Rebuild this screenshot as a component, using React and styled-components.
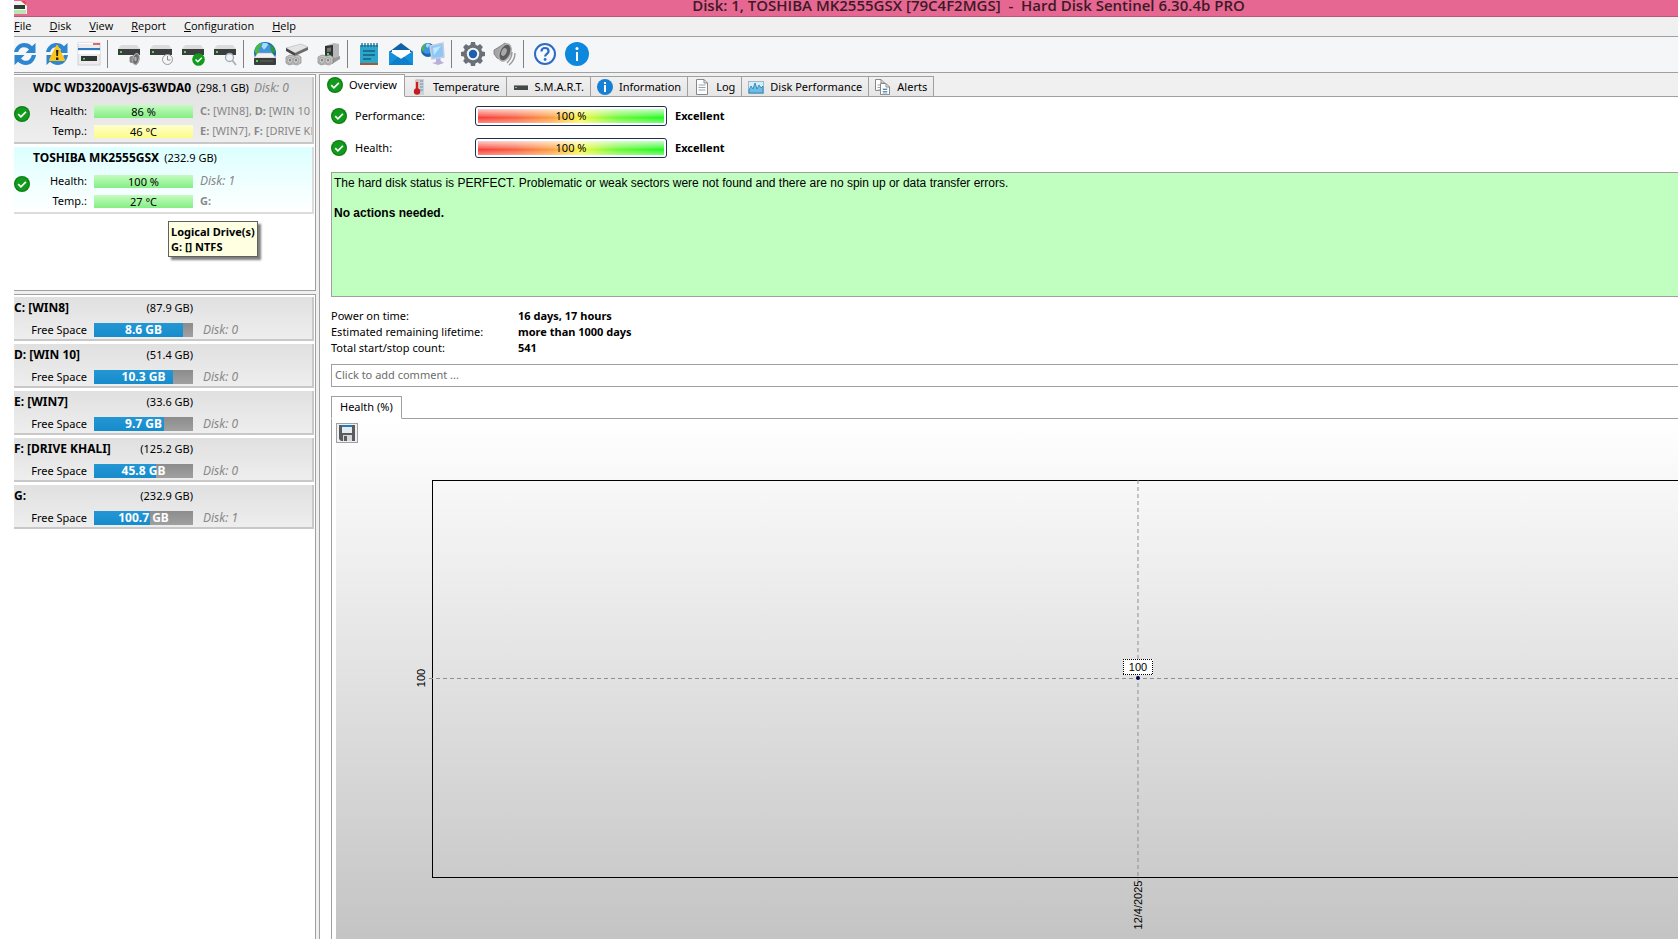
import React, { useState } from "react";
import styled, { createGlobalStyle, css } from "styled-components";

const GlobalStyle = createGlobalStyle`
  * {
    box-sizing: border-box;
  }
  body {
    margin: 0;
    background: #ffffff;
    color: #000000;
    font-family: "Noto Sans", "Open Sans", sans-serif;
    font-size: 11px;
    line-height: 16px;
    overflow-x: hidden;
  }
  button,
  input {
    font: inherit;
    color: inherit;
  }
`;

const Window = styled.div`
  min-height: 100vh;
  padding: 0 0 5px 14px;
  display: flex;
  flex-direction: column;
`;

const TitleBar = styled.header`
  height: 17px;
  display: flex;
  align-items: center;
  background: #e66792;
  border-bottom: 1px solid #b8577a;
  overflow: hidden;
  h1 {
    flex: 1;
    margin: 0 0 6px 232px;
    color: #3c1a26;
    font-family: "Open Sans", "Noto Sans", sans-serif;
    font-size: 15px;
    line-height: 20px;
    font-weight: 600;
    text-align: center;
    white-space: pre;
  }
`;

const MenuBar = styled.nav`
  height: 20px;
  display: flex;
  align-items: flex-start;
  gap: 18px;
  padding-top: 1px;
  background: #f0f0f0;
  border-bottom: 1px solid #a0a0a0;
  button {
    padding: 0;
    border: 0;
    background: none;
    font-family: "Open Sans", "Noto Sans", sans-serif;
  }
`;

const ToolBar = styled.div`
  height: 36px;
  display: flex;
  align-items: center;
  padding-bottom: 2px;
  overflow: hidden;
  background: #f5f6f8;
  border-bottom: 1px solid #a0a0a0;
`;

const ToolButton = styled.button`
  width: 32px;
  height: 32px;
  padding: 4px;
  border: 0;
  background: none;
  flex: none;
  &:first-child {
    margin-left: -5px;
  }
  svg {
    display: block;
  }
`;

const Separator = styled.span`
  width: 3px;
  height: 28px;
  margin-right: 5px;
  border-right: 1px solid #808080;
`;

const Content = styled.div`
  flex: 1;
  display: flex;
  gap: 3px;
  padding-top: 1px;
  background: #f0f0f0;
`;

const Sidebar = styled.aside`
  width: 302px;
  flex: none;
  display: flex;
  flex-direction: column;
  gap: 3px;
`;

const Panel = styled.section`
  display: flex;
  flex-direction: column;
  gap: 3px;
  padding: 2px 1px 0 0;
  background: #ffffff;
  border: 1px solid #a0a0a0;
  border-left: 0;
  ${({ $fill }) =>
    $fill
      ? css`
          flex: 1;
          border-bottom: 0;
        `
      : css`
          min-height: 217px;
        `}
`;

const Card = styled.article`
  flex: none;
  overflow: hidden;
  white-space: nowrap;
  border: solid ${({ $selected }) => ($selected ? "#dcdcdc" : "#c8c8c8")};
  border-width: 0 2px 2px 0;
  background: ${({ $selected }) =>
    $selected
      ? "linear-gradient(#dcffff, #ffffff)"
      : "linear-gradient(#e0e0e0, #eeeeee)"};
`;

const CardTitle = styled.h2`
  display: flex;
  align-items: baseline;
  gap: 5px;
  margin: 2px 0 4px 19px;
  font-size: 11px;
  line-height: 18px;
  font-weight: 400;
  b {
    font-size: 12px;
  }
`;

const DiskBody = styled.div`
  display: flex;
  padding-bottom: 1px;
  svg {
    flex: none;
    margin-top: 5px;
  }
`;

const Row = styled.div`
  height: 20px;
  display: flex;
  align-items: center;
  gap: 7px;
`;

const RowLabel = styled.span`
  width: ${({ $wide }) => ($wide ? 73 : 57)}px;
  text-align: right;
`;

const Muted = styled.span`
  color: #888888;
  ${({ $italic }) =>
    $italic &&
    css`
      font-style: italic;
      font-size: 12px;
    `}
`;

const meterColors = {
  green: "linear-gradient(#c4fcc0, #84ee84)",
  yellow: "linear-gradient(#ffffd0, #fcfc84)",
};

const Meter = styled.div`
  width: 99px;
  height: 13px;
  line-height: 13px;
  text-align: center;
  background: ${({ $color }) => meterColors[$color]};
`;

const SpaceMeter = styled.div`
  width: 99px;
  height: 14px;
  margin-right: 3px;
  line-height: 14px;
  text-align: center;
  color: #ffffff;
  font-size: 12px;
  font-weight: 700;
  background:
    linear-gradient(#2596d4, #168ccc) no-repeat 0 0 / ${({ $used }) => $used}% 100%,
    linear-gradient(#8c8c8c, #a0a0a0);
`;

const DriveTitle = styled.div`
  width: 179px;
  height: 22px;
  margin-bottom: 1px;
  display: flex;
  justify-content: space-between;
  align-items: center;
  b {
    font-size: 12px;
  }
`;

const DriveCard = styled(Card)`
  height: 44px;
`;

const ToolTip = styled.div`
  position: absolute;
  left: 168px;
  top: 221px;
  padding: 2px;
  border: 1px solid #606060;
  background: #ffffe1;
  box-shadow: 3px 3px 2px rgba(0, 0, 0, 0.5);
  font-weight: 700;
  line-height: 15px;
  white-space: nowrap;
`;

const Main = styled.main`
  flex: 1;
  min-width: 0;
  display: flex;
  flex-direction: column;
  border-left: 1px solid #a0a0a0;
  background: #ffffff;
`;

const TabStrip = styled.div`
  height: 23px;
  display: flex;
  align-items: flex-end;
  background: #f0f0f0;
  box-shadow: inset 0 -1px #a0a0a0;
`;

const Tab = styled.button`
  height: ${({ $active }) => ($active ? 23 : 21)}px;
  display: flex;
  align-items: center;
  gap: 6px;
  padding: ${({ $active }) => ($active ? "0 7px 2px" : "0 6px")};
  border: 1px solid #a0a0a0;
  border-left-width: ${({ $active }) => ($active ? 1 : 0)}px;
  border-bottom-color: ${({ $active }) => ($active ? "#ffffff" : "#a0a0a0")};
  background: ${({ $active }) =>
    $active ? "#ffffff" : "linear-gradient(#f0f0f0, #e6e6e6)"};
  white-space: nowrap;
  &:first-child {
    border-left: 0;
  }
`;

const Overview = styled.div`
  flex: 1;
  display: flex;
  flex-direction: column;
  padding: 3px 0 0 11px;
`;

const StatusRow = styled.div`
  height: 32px;
  display: flex;
  align-items: center;
  strong {
    font-weight: 700;
  }
`;

const StatusLabel = styled.span`
  width: 128px;
  padding-left: 8px;
`;

const StatusMeter = styled.div`
  width: 192px;
  height: 20px;
  margin-right: 8px;
  padding: 2px;
  border: 1px solid #1c3050;
  border-radius: 3px;
  div {
    height: 14px;
    line-height: 14px;
    text-align: center;
    background:
      linear-gradient(
        rgba(255, 255, 255, 0.75),
        rgba(255, 255, 255, 0.2) 50%,
        rgba(255, 255, 255, 0) 60%,
        rgba(255, 255, 255, 0.4)
      ),
      linear-gradient(90deg, #f83c34, #f86040 20%, #fca040 40%, #f8f840 55%, #70f838 75%, #20f820);
  }
`;

const StatusText = styled.div`
  height: 125px;
  margin-top: 8px;
  padding: 3px 2px;
  border: 1px solid #a0a0a0;
  border-right: 0;
  background: #c0ffc0;
  font-family: "Liberation Sans", Arial, sans-serif;
  font-size: 12px;
  line-height: 15px;
  p {
    margin: 0 0 15px;
  }
`;

const Facts = styled.dl`
  display: grid;
  grid-template-columns: 187px 1fr;
  margin: 11px 0 8px;
  dd {
    margin: 0;
    font-weight: 700;
  }
`;

const CommentInput = styled.input`
  width: 100%;
  height: 23px;
  padding: 0 3px 2px;
  border: 1px solid #a0a0a0;
  border-right: 0;
  background: #ffffff;
  &::placeholder {
    color: #6d6d6d;
    opacity: 1;
  }
`;

const ChartTabs = styled.div`
  display: flex;
  height: 23px;
  margin-top: 9px;
  box-shadow: inset 0 -1px #a0a0a0;
  button {
    padding: 0 8px 2px;
    border: 1px solid #a0a0a0;
    border-bottom-color: #ffffff;
    background: #ffffff;
  }
`;

const ChartFrame = styled.div`
  flex: 1;
  display: flex;
  padding-left: 4px;
  border-left: 1px solid #a0a0a0;
`;

const ChartArea = styled.div`
  position: relative;
  flex: 1;
  background: linear-gradient(#ffffff, #c4c4c4);
  > svg {
    display: block;
  }
  text {
    font-family: "Liberation Sans", Arial, sans-serif;
    font-size: 11px;
    text-anchor: middle;
  }
`;

const SaveButton = styled.button`
  position: absolute;
  left: 0;
  top: 4px;
  width: 22px;
  height: 20px;
  padding: 1px 2px;
  border: 1px solid #a0a0a0;
  background: #f0f0f0;
  svg {
    display: block;
  }
`;

// Icons
const CheckIcon = () => (
  <svg width="16" height="16" viewBox="0 0 16 16" aria-hidden="true">
    <circle cx="8" cy="8" r="8" fill="#0a7f12" />
    <circle cx="8" cy="8" r="6.8" fill="#129a1c" />
    <path d="M4.2 8.2l2.7 2.6 5-5" fill="none" stroke="#fff" strokeWidth="1.7" />
  </svg>
);

const Icon = ({ children, size = 24 }) => (
  <svg width={size} height={size} viewBox={`0 0 ${size} ${size}`} aria-hidden="true">
    {children}
  </svg>
);

const RefreshArrows = () => (
  <g fill="#2f86d0">
    <path d="M1 10C2 5 6 1 11 1c3.500 0 6 1.200 8 3.200L22.500 1v10H12.500l3.500-3.500C14.500 6 13 5.200 11 5.200 8 5.200 6 7 5.200 10z" />
    <path d="M23 13c-1 6-5 10-10 10-3.500 0-6-1.200-8-3.200L1.500 23V13h10L8 16.500c1.500 1.500 3 2.300 5 2.300 3 0 5-2 5.800-5.800z" />
  </g>
);

const DriveShape = () => (
  <>
    <path d="M4 3h16l3 4H1z" fill="#dcdcdc" />
    <rect x="1" y="7" width="22" height="6" fill="#3a3f3e" />
    <rect x="3" y="9" width="2" height="2" fill="#4be04b" />
  </>
);

const Globe = ({ x, y, r }) => (
  <g transform={`translate(${x} ${y}) scale(${r / 10})`}>
    <circle r="10" fill="#1766b4" />
    <circle cx="-1" cy="-2" r="7.500" fill="#3f94dc" />
    <path d="M-2-9c2-.5 4 0 5 1L1-5l-2 2-2-3z" fill="#a8dcfa" />
    <path d="M-9.500-2C-8.500-6-6.500-8-4-9l1 2-3 3 1 3-3 3z" fill="#4cb83c" />
    <path d="M5-8c3 2 4 4 4.500 7L7 0 5-3z" fill="#2f9a36" />
  </g>
);

const Connector = () => (
  <g stroke="#777" strokeWidth=".6">
    <path d="M1 15l4-2 4 1 4-1 3 2v6l-4 2-4-1-4 1-3-2z" fill="#c4c4c4" />
    <path d="M3 16h4v5H3zM9 16h4v5H9z" fill="#ececec" />
    <path d="M5 17v2.500M11 17v2.500" stroke="#444" strokeWidth="1.200" />
  </g>
);

const toolIcons = {
  Refresh: <RefreshArrows />,
  "Refresh with warnings": (
    <>
      <RefreshArrows />
      <path d="M12 4l7 14H5z" fill="#fcc419" stroke="#fcc419" strokeWidth="2" strokeLinejoin="round" />
      <path d="M11 8h2.400l-.4 6h-1.600zM11 15.500h2.400V18H11z" fill="#222" />
    </>
  ),
  "Disk window": (
    <>
      <rect x="1" y="1" width="22" height="22" fill="#ececee" stroke="#d0d0d4" />
      <path d="M1 1.500h19" stroke="#fff" />
      <path d="M16 2h7" stroke="#d84848" strokeWidth="1.600" />
      <rect x="1" y="6" width="22" height="2" fill="#2c7cc4" />
      <rect x="1" y="9" width="22" height="3" fill="#fff" />
      <rect x="4" y="14" width="16" height="5" fill="#303836" />
      <rect x="6" y="16" width="2" height="1.500" fill="#4be04b" />
    </>
  ),
  "Disk sound": (
    <>
      <DriveShape />
      <path d="M13 15l3-1 4-3c3 3 3 9-1 12l-3-2-3-1z" fill="#8b8b8b" stroke="#777" strokeWidth=".7" />
      <ellipse cx="19" cy="17" rx="3" ry="5.500" transform="rotate(15 19 17)" fill="#6c6c6c" stroke="#b4b4b4" />
      <ellipse cx="18.500" cy="17" rx="1.200" ry="2.200" fill="#b0b0b0" />
    </>
  ),
  "Disk schedule": (
    <>
      <DriveShape />
      <circle cx="18.500" cy="17.500" r="5" fill="#f4f4f4" stroke="#9a9a9a" />
      <path d="M18.500 14v4h3" fill="none" stroke="#888" />
    </>
  ),
  "Disk test": (
    <>
      <DriveShape />
      <circle cx="17.500" cy="17.500" r="6.300" fill="#129a1c" />
      <path d="M14.500 17.500l2.300 2.200 4-4" fill="none" stroke="#fff" strokeWidth="1.500" />
    </>
  ),
  "Disk search": (
    <>
      <DriveShape />
      <path d="M19 18l4 5" stroke="#b0b0b8" strokeWidth="2" />
      <circle cx="16.500" cy="15.500" r="4" fill="#eef4fa" stroke="#a4a8b0" strokeWidth="1.300" />
    </>
  ),
  "Network disk": (
    <>
      <Globe x={12} y={11} r={11} />
      <path d="M5 11h14l4 5H1z" fill="#f2f2f2" stroke="#aaa" strokeWidth=".5" />
      <rect x="1" y="16" width="22" height="7" rx="1" fill="#3a3f3e" />
      <rect x="3" y="18" width="2" height="2" fill="#4be04b" />
      <path d="M7 19h13" stroke="#666" />
    </>
  ),
  "Connect disk": (
    <>
      <path d="M1 6l15-4 7 3-13 6z" fill="#e4e4e4" stroke="#aaa" strokeWidth=".5" />
      <path d="M10 11l13-6v3l-13 6z" fill="#6c6c6c" />
      <path d="M1 6l9 5v3L1 9z" fill="#444" />
      <Connector />
    </>
  ),
  "Connect enclosure": (
    <>
      <path d="M8 4l9-3 5 1v14l-7 4-7-2z" fill="#b8b8b8" />
      <path d="M8 4l8-1v12l-8 1z" fill="#333" />
      <path d="M10 6l4-.5v4l-4 .5z" fill="#777" />
      <rect x="10" y="11" width="2" height="2" fill="#4be04b" />
      <path d="M15 17l8-3v3l-8 5z" fill="#999" />
      <Connector />
    </>
  ),
  Report: (
    <>
      <rect x="3" y="3" width="18" height="19" fill="#2da6cc" />
      <rect x="3" y="21" width="18" height="2" fill="#a65a30" />
      <path d="M5 1v4M8 1v4M11 1v4M14 1v4M17 1v4M20 1v4" stroke="#1c5d78" strokeWidth="1.200" />
      <path d="M6 9h12M6 13h12M6 17h8" stroke="#145f80" strokeWidth="1.500" />
    </>
  ),
  "Send report": (
    <>
      <path d="M0 10L12 1l12 9z" fill="#1262a8" />
      <path d="M3 8h18v9H3z" fill="#fff" />
      <path d="M0 9l12 8 12-8v14H0z" fill="#1690dc" />
      <path d="M0 23l9-8 3 2 3-2 9 8z" fill="#0c7ecb" />
    </>
  ),
  "Remote status": (
    <>
      <Globe x={7} y={8} r={7} />
      <path d="M9 4l13-3 1 14-12 2z" fill="#8cc8f4" stroke="#c8cce0" strokeWidth="1.500" />
      <path d="M12 6l8-2-7 9z" fill="#c4e6ff" />
      <path d="M15 17l4-1 1 3 3 2-6 2-6-2 4-1z" fill="#b8b0dc" />
    </>
  ),
  Settings: (
    <>
      <g fill="#6b7078">
        {[0, 45, 90, 135, 180, 225, 270, 315].map((angle) => (
          <path key={angle} d="M9 5L10 0h4l1 5z" transform={`rotate(${angle} 12 12)`} />
        ))}
        <circle cx="12" cy="12" r="9.500" />
      </g>
      <circle cx="12" cy="12" r="6.200" fill="#f2f5f8" />
      <circle cx="12" cy="12" r="4.200" fill="#1d5fae" />
    </>
  ),
  Sound: (
    <>
      <path d="M1 8l5-3 6-4 3 2-4 16-7-3-3-4z" fill="#a4a4a4" stroke="#777" strokeWidth=".8" />
      <ellipse cx="12" cy="10.500" rx="5.500" ry="9" transform="rotate(24 12 10.500)" fill="#5c5c5c" stroke="#b0b0b0" strokeWidth="1.500" />
      <ellipse cx="11" cy="10" rx="2.500" ry="4" transform="rotate(24 11 10)" fill="#a8a8a8" />
      <path d="M19 10c0 5-2 8-5 11M22 11c0 5-2 9-6 12" fill="none" stroke="#9a9a9e" strokeWidth="1.400" />
    </>
  ),
  Help: (
    <>
      <circle cx="12" cy="12" r="10" fill="#f6f9ff" stroke="#2d6cc4" strokeWidth="2" />
      <path d="M8.500 9.500C8.500 7 10 6 12 6s3.600 1.200 3.600 3.200c0 2.600-3.500 2.600-3.500 5.300" fill="none" stroke="#2d6cc4" strokeWidth="2.200" />
      <circle cx="12.100" cy="17.500" r="1.400" fill="#2d6cc4" />
    </>
  ),
  About: (
    <>
      <circle cx="12" cy="12" r="12" fill="#0e88dc" />
      <circle cx="12" cy="6.500" r="1.500" fill="#fff" />
      <rect x="11" y="10" width="2" height="9" fill="#fff" />
    </>
  ),
};

const toolGroups = [
  ["Refresh", "Refresh with warnings", "Disk window"],
  ["Disk sound", "Disk schedule", "Disk test", "Disk search"],
  ["Network disk", "Connect disk", "Connect enclosure"],
  ["Report", "Send report", "Remote status"],
  ["Settings", "Sound"],
  ["Help", "About"],
];

const PageShape = ({ x = 2, y = 0, w = 12, h = 16 }) => (
  <g transform={`translate(${x} ${y})`}>
    <path d={`M.5 .5H${w - 4}L${w - 0.5} 4V${h - 0.5}H.5z`} fill="#fff" stroke="#888" />
    <path d={`M${w - 4} .5V4h3.500`} fill="none" stroke="#888" />
    <path d={`M2.500 6h${w - 5}M2.500 8.500h${w - 5}M2.500 11h${w - 5}`} stroke="#9aa4ac" />
  </g>
);

const tabIcons = {
  Overview: <CheckIcon />,
  Temperature: (
    <Icon size={16}>
      <path d="M7 0h6v16H7z" fill="#c4d4dc" />
      <path d="M9 2h3M9 5h3M9 8h3M9 11h3" stroke="#7c8c98" />
      <rect x="4" y="0" width="4" height="12" rx="2" fill="#e0b8b4" />
      <rect x="5" y="3" width="2" height="9" fill="#c82020" />
      <circle cx="6" cy="12.500" r="3.200" fill="#c81c1c" />
    </Icon>
  ),
  "S.M.A.R.T.": (
    <Icon size={16}>
      <rect x="1" y="6" width="14" height="5" fill="#444848" />
      <path d="M1 6.500h14" stroke="#8c8c8c" />
      <rect x="2" y="8" width="2" height="1" fill="#6c8" />
    </Icon>
  ),
  Information: (
    <Icon size={16}>
      <circle cx="8" cy="8" r="8" fill="#1680d4" />
      <rect x="7" y="3" width="2" height="2" fill="#fff" />
      <rect x="7" y="6" width="2" height="7" fill="#fff" />
    </Icon>
  ),
  Log: (
    <Icon size={16}>
      <PageShape />
    </Icon>
  ),
  "Disk Performance": (
    <Icon size={16}>
      <rect x=".5" y="2.500" width="15" height="12" fill="#d4eefc" stroke="#a4b8c4" />
      <path d="M1 11l2-4 2 3 2-6 2 6 2-4 2 3 2-2v7H1z" fill="#6cbce4" stroke="#2680b4" strokeWidth=".8" />
    </Icon>
  ),
  Alerts: (
    <Icon size={16}>
      <PageShape x={0} y={0} w={10} h={12} />
      <PageShape x={5} y={4} w={10} h={12} />
      <path d="M8 10.500h4M8 13h4" stroke="#2f8cd0" />
    </Icon>
  ),
};

const menuItems = ["File", "Disk", "View", "Report", "Configuration", "Help"];

const disks = [
  {
    name: "WDC WD3200AVJS-63WDA0",
    size: "(298.1 GB)",
    index: "Disk: 0",
    health: "86 %",
    temp: "46 °C",
    tempColor: "yellow",
    first: [["C:", "[WIN8],"], ["D:", "[WIN 10"]],
    second: [["E:", "[WIN7],"], ["F:", "[DRIVE KHALI]"]],
  },
  {
    name: "TOSHIBA MK2555GSX",
    size: "(232.9 GB)",
    health: "100 %",
    temp: "27 °C",
    tempColor: "green",
    note: "Disk: 1",
    second: [["G:", ""]],
    selected: true,
  },
];

const drives = [
  { name: "C: [WIN8]", size: "(87.9 GB)", free: "8.6 GB", used: 90, disk: "Disk: 0" },
  { name: "D: [WIN 10]", size: "(51.4 GB)", free: "10.3 GB", used: 80, disk: "Disk: 0" },
  { name: "E: [WIN7]", size: "(33.6 GB)", free: "9.7 GB", used: 71, disk: "Disk: 0" },
  { name: "F: [DRIVE KHALI]", size: "(125.2 GB)", free: "45.8 GB", used: 63, disk: "Disk: 0" },
  { name: "G:", size: "(232.9 GB)", free: "100.7 GB", used: 57, disk: "Disk: 1" },
];

function Volumes({ items }) {
  return (
    <Muted>
      {items.map(([letter, label]) => (
        <React.Fragment key={letter}>
          <b>{letter}</b> {label}{" "}
        </React.Fragment>
      ))}
    </Muted>
  );
}

function DiskCard({ disk }) {
  return (
    <Card $selected={disk.selected}>
      <CardTitle>
        <b>{disk.name}</b>
        <span>{disk.size}</span>
        {disk.index && <Muted $italic>{disk.index}</Muted>}
      </CardTitle>
      <DiskBody>
        <CheckIcon />
        <div>
          <Row>
            <RowLabel>Health:</RowLabel>
            <Meter $color="green">{disk.health}</Meter>
            {disk.note ? <Muted $italic>{disk.note}</Muted> : <Volumes items={disk.first} />}
          </Row>
          <Row>
            <RowLabel>Temp.:</RowLabel>
            <Meter $color={disk.tempColor}>{disk.temp}</Meter>
            <Volumes items={disk.second} />
          </Row>
        </div>
      </DiskBody>
    </Card>
  );
}

function Drive({ drive }) {
  return (
    <DriveCard>
      <DriveTitle>
        <b>{drive.name}</b>
        <span>{drive.size}</span>
      </DriveTitle>
      <Row>
        <RowLabel $wide>Free Space</RowLabel>
        <SpaceMeter $used={drive.used}>{drive.free}</SpaceMeter>
        <Muted $italic>{drive.disk}</Muted>
      </Row>
    </DriveCard>
  );
}

function HealthChart() {
  return (
    <ChartArea>
      <SaveButton aria-label="Save chart">
        <Icon size={16}>
          <path d="M0 0h16v16H2l-2-2z" fill="#585c60" />
          <rect x="3" y="0" width="10" height="8" fill="#e4ecf2" />
          <rect x="3" y="0" width="10" height="2" fill="#2c78b8" />
          <rect x="4" y="10" width="9" height="6" fill="#d8d8d8" />
          <rect x="5" y="11" width="3" height="5" fill="#585c60" />
        </Icon>
      </SaveButton>
      <svg width="100%" height="520" role="img" aria-label="Health (%)">
        <g shapeRendering="crispEdges">
          <path d="M4000 61.500H96.500V458.500H4000" fill="none" stroke="#000" />
          <line x1="93" x2="100%" y1="259.500" y2="259.500" stroke="#909090" strokeDasharray="4 3" />
        </g>
        <text transform="translate(89 259) rotate(-90)">100</text>
        <svg x="59.760%" overflow="visible">
          <line x1="0" x2="0" y1="61" y2="462" stroke="#909090" strokeDasharray="4 3" />
          <rect x="-15" y="240" width="30" height="16" fill="#fff" />
          <rect x="-14.500" y="240.500" width="29" height="15" fill="none" stroke="#000" strokeDasharray="1 1" shapeRendering="crispEdges" />
          <text x="0" y="252">100</text>
          <circle cx="0" cy="259" r="2" fill="#000050" />
          <text transform="translate(4 486) rotate(-90)">12/4/2025</text>
        </svg>
      </svg>
    </ChartArea>
  );
}

function App() {
  const [activeTab, setActiveTab] = useState("Overview");

  return (
    <>
      <GlobalStyle />
      <Window>
        <TitleBar>
          <svg width="13" height="14" viewBox="0 0 13 14" aria-hidden="true">
            <path d="M0 0h9l4 4v9H0z" fill="#f4f4f0" />
            <path d="M7 0h4l2 5z" fill="#e04848" />
            <rect y="4" width="11" height="4" fill="#303c34" />
            <rect y="9" width="12" height="4" fill="#b8e8b0" />
          </svg>
          <h1>{"Disk: 1, TOSHIBA MK2555GSX [79C4F2MGS]  -  Hard Disk Sentinel 6.30.4b PRO"}</h1>
        </TitleBar>
        <MenuBar>
          {menuItems.map((item) => (
            <button key={item}>
              <u>{item[0]}</u>
              {item.slice(1)}
            </button>
          ))}
        </MenuBar>
        <ToolBar>
          {toolGroups.map((group, index) => (
            <React.Fragment key={group[0]}>
              {index > 0 && <Separator />}
              {group.map((name) => (
                <ToolButton key={name} aria-label={name}>
                  <Icon>{toolIcons[name]}</Icon>
                </ToolButton>
              ))}
            </React.Fragment>
          ))}
        </ToolBar>
        <Content>
          <Sidebar>
            <Panel>
              {disks.map((disk) => (
                <DiskCard key={disk.name} disk={disk} />
              ))}
            </Panel>
            <Panel $fill>
              {drives.map((drive) => (
                <Drive key={drive.name} drive={drive} />
              ))}
            </Panel>
          </Sidebar>
          <Main>
            <TabStrip role="tablist">
              {Object.keys(tabIcons).map((name) => (
                <Tab
                  key={name}
                  role="tab"
                  aria-selected={activeTab === name}
                  $active={activeTab === name}
                  onClick={() => setActiveTab(name)}
                >
                  {tabIcons[name]}
                  {name}
                </Tab>
              ))}
            </TabStrip>
            <Overview>
              {["Performance:", "Health:"].map((label) => (
                <StatusRow key={label}>
                  <CheckIcon />
                  <StatusLabel>{label}</StatusLabel>
                  <StatusMeter>
                    <div>100 %</div>
                  </StatusMeter>
                  <strong>Excellent</strong>
                </StatusRow>
              ))}
              <StatusText>
                <p>
                  The hard disk status is PERFECT. Problematic or weak sectors were not found and
                  there are no spin up or data transfer errors.
                </p>
                <b>No actions needed.</b>
              </StatusText>
              <Facts>
                <dt>Power on time:</dt>
                <dd>16 days, 17 hours</dd>
                <dt>Estimated remaining lifetime:</dt>
                <dd>more than 1000 days</dd>
                <dt>Total start/stop count:</dt>
                <dd>541</dd>
              </Facts>
              <CommentInput aria-label="Comment" placeholder="Click to add comment ..." />
              <ChartTabs>
                <button>Health (%)</button>
              </ChartTabs>
              <ChartFrame>
                <HealthChart />
              </ChartFrame>
            </Overview>
          </Main>
        </Content>
      </Window>
      <ToolTip role="tooltip">
        Logical Drive(s)
        <br />
        G: [] NTFS
      </ToolTip>
    </>
  );
}

export default App;
